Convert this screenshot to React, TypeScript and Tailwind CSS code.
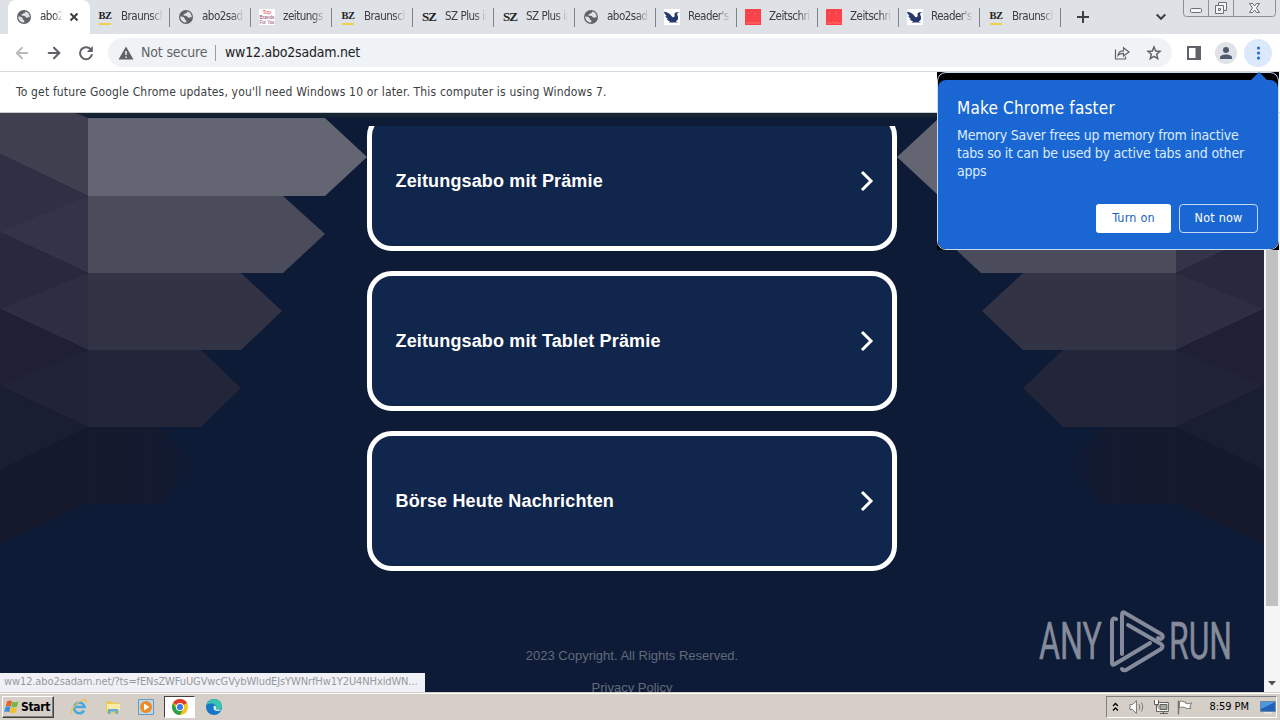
import { ReactNode } from 'react';
import { ArrowLeft, ArrowRight } from 'lucide-react';

type Icon = 'globe' | 'bz' | 'brands' | 'sz' | 'bird' | 'red';

const TABS: { icon: Icon; title: string }[] = [
  { icon: 'globe', title: 'abo2' },
  { icon: 'bz', title: 'Braunsch' },
  { icon: 'globe', title: 'abo2sad' },
  { icon: 'brands', title: 'zeitungs' },
  { icon: 'bz', title: 'Braunsch' },
  { icon: 'sz', title: 'SZ Plus in' },
  { icon: 'sz', title: 'SZ Plus in' },
  { icon: 'globe', title: 'abo2sad' },
  { icon: 'bird', title: "Reader's" },
  { icon: 'red', title: 'Zeitschri' },
  { icon: 'red', title: 'Zeitschri' },
  { icon: 'bird', title: "Reader's" },
  { icon: 'bz', title: 'Braunsch' },
];

const LINKS = ['Zeitungsabo mit Prämie', 'Zeitungsabo mit Tablet Prämie', 'Börse Heute Nachrichten'];

function Favicon({ icon }: { icon: Icon }) {
  if (icon === 'globe') {
    return (
      <svg className="shrink-0" width="16" height="16" viewBox="0 0 16 16">
        <circle cx="8" cy="8" r="7" fill="#5f6368" />
        <path d="M2.2 7.6c1.6 0 3 .2 4 1.200.9.900.2 1.900 1.400 2.200 1 .3.900 1.400.5 2.600C4.700 13.700 2.300 11.200 2.200 7.600ZM9.300 2.400c-.2 1.300-.6 1.700-1.700 1.800-1 .1-.9 1-1.800 1.200-.7.2-.3 1.300.7 1.300 1.600 0 2.700.2 3.100 1.300.4.900 1.400.7 2.200.4.700-.3 1.400-.3 1.900.1.300-3-1.700-5.600-4.400-6.100Z" fill="#dee1e6" />
      </svg>
    );
  }
  if (icon === 'bz') {
    return (
      <span className="flex h-4 w-4 shrink-0 flex-col items-center font-['Liberation_Serif'] text-[10.5px] leading-[14px] font-bold tracking-[-0.6px] text-[#222]">
        BZ
        <span className="h-[2px] w-3 bg-[#f0cf4a]" />
      </span>
    );
  }
  if (icon === 'sz') {
    return <span className="flex h-4 w-4 shrink-0 items-center justify-center font-['Liberation_Serif'] text-[13px] font-bold tracking-[-1px] text-[#222]">SZ</span>;
  }
  if (icon === 'brands') {
    return (
      <svg className="shrink-0" width="16" height="16" viewBox="0 0 16 16">
        <path d="M0 0h16v16H0z" fill="#fff" />
        <g fontFamily="Liberation Sans, sans-serif" fontSize="5.500" fill="#8f3b68" textAnchor="middle">
          <text x="8" y="4.800" fill="#e8383c">Top</text>
          <text x="8" y="10" textLength="15" lengthAdjust="spacingAndGlyphs">Brands</text>
          <text x="8" y="15.300" textLength="15" lengthAdjust="spacingAndGlyphs">For You</text>
        </g>
      </svg>
    );
  }
  if (icon === 'bird') {
    return (
      <svg className="shrink-0" width="16" height="16" viewBox="0 0 16 16">
        <path d="M0 0h16v16H0z" fill="#fff" />
        <path d="M0 2.800c2 .2 5.500 1 7.500 4.200.8 1.300 2 1.600 2.800.8.900-1-.3-2.300.4-3.500.9-1.500 3-1.400 5-.6-1.400.2-2.600.5-2.700 1.400 0 1 1.300 2.100 1.100 4.100-.2 1.700-1.200 2.700-2.600 3.200l2.800 1.200H4.500l1.800-1.300C4.500 12 3.300 11.200 2.800 10l1.500.1C2.700 9.300 1.700 8.200 1.400 6.900l1.500.4C1.300 6 .4 4.600 0 2.800Z" fill="#27386f" />
      </svg>
    );
  }
  return (
    <svg className="shrink-0" width="16" height="16" viewBox="0 0 16 16">
      <path d="M0 0h16v16H0z" fill="#fb4248" />
      <path d="M1 14.500l2-1 2 1 2-1.500 2 1.500 2-1 2 1 2-1M3 4l2 1M9 5l2-1" stroke="#ff7476" fill="none" />
    </svg>
  );
}

function TabStrip() {
  return (
    <div className="flex h-[34px] bg-[#dee1e6] pl-2">
      {TABS.map((t, i) => (
        <div
          key={i}
          className={
            i === 0
              ? '-mr-px flex h-[34px] w-[82px] items-center rounded-t-lg bg-white pl-2'
              : 'relative flex h-[34px] w-[81px] items-center pl-2'
          }
        >
          <Favicon icon={t.icon} />
          <span
            className={
              i === 0
                ? 'ml-2 w-[23px] text-[11.5px] tracking-[-0.5px] whitespace-nowrap text-[#3c4043] [mask-image:linear-gradient(to_right,black_60%,transparent)]'
                : 'ml-2 w-[42px] text-[11.5px] tracking-[-0.5px] whitespace-nowrap text-[#3c4043] [mask-image:linear-gradient(to_right,black_70%,transparent)]'
            }
          >
            {t.title}
          </span>
          {i === 0 ? (
            <svg className="ml-[6px]" width="10" height="10" viewBox="0 0 10 10">
              <path d="M1.500 1.500l7 7M8.500 1.500l-7 7" stroke="#3c4043" strokeWidth="2" />
            </svg>
          ) : (
            <span className="absolute top-2 right-0 h-[19px] w-px bg-[#808387]" />
          )}
        </div>
      ))}
      <svg className="mt-[10px] ml-[15px]" width="14" height="14" viewBox="0 0 14 14">
        <path d="M7 1v12M1 7h12" stroke="#3c4043" strokeWidth="2" />
      </svg>
      <svg className="mt-[13px] ml-[66px]" width="10" height="8" viewBox="0 0 10 8">
        <path d="M.7 1.500L5 5.800 9.300 1.500" stroke="#3c4043" strokeWidth="2" fill="none" />
      </svg>
      <svg className="ml-[17px]" width="94" height="18" viewBox="0 0 94 18" fill="none" stroke="#8d9095">
        <path d="M.5 0v13.500a3 3 0 0 0 3 3h86a3 3 0 0 0 3-3V0M25.500 0v16.500M50.500 0v16.500" />
        <rect x="7.500" y="8.500" width="11" height="4" rx="1" stroke="#6b6e73" fill="#f4f5f7" />
        <path d="M35.500 2.500h8v8h-3v3h-8v-8h3zM35.500 5.500h5v5" stroke="#6b6e73" fill="#f4f5f7" />
        <path d="M35.500 8.500h2v2h-2z" stroke="#6b6e73" />
        <path d="M66.500 3.500h3l2 2.500 2-2.500h3L73.500 8l3 4.500h-3l-2-2.500-2 2.500h-3L69.500 8z" stroke="#6b6e73" fill="#f4f5f7" />
      </svg>
    </div>
  );
}

function Toolbar() {
  return (
    <div className="flex h-[38px] items-center border-b border-[#d7d9dc] bg-white text-[#5f6368]">
      <ArrowLeft className="ml-[13px] text-[#b8babd]" size={18} strokeWidth={2.4} />
      <ArrowRight className="ml-[14px]" size={18} strokeWidth={2.8} />
      <svg className="ml-[15px]" width="16" height="16" viewBox="0 0 16 16">
        <path d="M13.300 5.200A6 6 0 1 0 14 9.200" stroke="#5f6368" strokeWidth="2" fill="none" />
        <path d="M14.800 1v6h-6z" fill="#5f6368" />
      </svg>
      <div className="ml-[14px] flex h-[29px] w-[1064px] items-center rounded-full bg-[#f0f3f5] pl-[10px]">
        <svg width="16" height="14" viewBox="0 0 16 14">
          <path d="M8 .5L15.500 13.500H.5z" fill="#5f6368" />
          <path d="M8 5v4M8 10.500v1.500" stroke="#f0f3f5" strokeWidth="1.500" />
        </svg>
        <span className="ml-[7px] w-[67px] text-[14px] tracking-[-0.15px] whitespace-nowrap">Not secure</span>
        <span className="ml-[7px] h-4 w-px bg-[#9a9da1]" />
        <span className="ml-[9px] grow text-[14px] tracking-[-0.22px] text-[#202124]">ww12.abo2sadam.net</span>
        <svg width="16" height="16" viewBox="0 0 16 16" fill="none" stroke="#5f6368" strokeWidth="1.200">
          <path d="M1.500 4.500v9.500h10v-2.500" />
          <path d="M4 10.500c.3-3 2.200-4.700 5.500-4.700V2.800L15 7l-5.500 4V8.400C7 8.400 5.200 9 4 10.500Z" />
        </svg>
        <svg className="mr-[10px] ml-4" width="16" height="16" viewBox="0 0 16 16">
          <path d="M8 2l1.700 4 4.300.4-3.300 2.900 1 4.300L8 11.300l-3.700 2.300 1-4.300L2 6.400 6.300 6z" fill="none" stroke="#5f6368" strokeWidth="1.500" />
        </svg>
      </div>
      <svg className="ml-[15px]" width="14" height="14" viewBox="0 0 14 14">
        <path d="M1 1h12v12H1z" fill="none" stroke="#5f6368" strokeWidth="2" />
        <path d="M8.500 0H14v14H8.500z" fill="#5f6368" />
      </svg>
      <svg className="ml-[14px]" width="22" height="22" viewBox="0 0 22 22">
        <circle cx="11" cy="11" r="11" fill="#dfe2e6" />
        <circle cx="11" cy="8" r="3" fill="#4e5a70" />
        <path d="M5 17v-1.500c0-4 12-4 12 0V17z" fill="#4e5a70" />
      </svg>
      <svg className="ml-[7px]" width="28" height="28" viewBox="0 0 28 28">
        <circle cx="14" cy="14" r="14" fill="#dce8fb" />
        <g fill="#1a66d2">
          <circle cx="14.500" cy="9" r="1.500" />
          <circle cx="14.500" cy="14" r="1.500" />
          <circle cx="14.500" cy="19" r="1.500" />
        </g>
      </svg>
    </div>
  );
}

// One side of the backdrop; the other side is the same group mirrored
function Facets() {
  return (
    <g>
      <path d="M0 0H75L88 5V83L0 41Z" fill="#403f50" />
      <path d="M0 41L88 83 0 124Z" fill="#302f43" />
      <path d="M88 83V160L0 119Z" fill="#343448" />
      <path d="M0 119L88 160 0 200Z" fill="#29293d" />
      <path d="M88 160V237L0 196Z" fill="#2e2e42" />
      <path d="M0 196L88 237 0 278Z" fill="#1f2035" />
      <path d="M88 237V314L0 273Z" fill="#212337" />
      <path d="M0 273L88 314 0 357Z" fill="#191e33" />
      <path d="M88 314V391L0 432V357Z" fill="#14192e" />
      <path d="M88 5H325L367 44 325 83H88Z" fill="#646573" />
      <path d="M88 83H283L325 121 283 160H88Z" fill="#4b4c5b" />
      <path d="M88 160H241L282 198 241 237H88Z" fill="#323345" />
      <path d="M88 237H201L241 275 201 314H88Z" fill="#222638" />
      <path d="M88 314H160L200 352 160 391H88Z" fill="url(#fade)" />
    </g>
  );
}

function LinkCard({ children }: { children: ReactNode }) {
  return (
    <div className="flex h-[140px] w-[530px] shrink-0 items-center justify-between rounded-[25px] border-[5px] border-white bg-[#10264d] pr-[18px] pl-[23.5px]">
      <span className="font-['Liberation_Sans'] text-[18px] font-bold tracking-[0.15px] text-white">{children}</span>
      <svg width="14" height="22" viewBox="0 0 14 22">
        <path d="M2 2l9 9-9 9" stroke="#fff" strokeWidth="3" fill="none" />
      </svg>
    </div>
  );
}

function Page() {
  return (
    <div className="relative flex h-[579px] bg-[#0e1b36]">
      <svg className="absolute top-0 left-0" width="1264" height="579" viewBox="0 0 1264 579">
        <defs>
          <linearGradient id="fade" x1="0" x2="1">
            <stop offset="0" stopColor="#151a2e" />
            <stop offset=".6" stopColor="#141a2f" />
            <stop offset="1" stopColor="#0e1b36" />
          </linearGradient>
        </defs>
        <path d="M0 0H1264V4H0z" fill="#152430" />
        <Facets />
        <g transform="translate(1264 0) scale(-1 1)">
          <Facets />
        </g>
      </svg>
      <div className="relative flex w-[1264px] flex-col items-center overflow-hidden pt-[13px]">
        <div className="flex shrink-0 flex-col gap-5 overflow-hidden">
          <div className="-mt-[15px]">
            <LinkCard>{LINKS[0]}</LinkCard>
          </div>
          <LinkCard>{LINKS[1]}</LinkCard>
          <LinkCard>{LINKS[2]}</LinkCard>
        </div>
        <div className="mt-[77px] flex shrink-0 flex-col items-center gap-4 font-['Liberation_Sans'] text-[13px] leading-4 text-[#626a7c]">
          <span>2023 Copyright. All Rights Reserved.</span>
          <span>Privacy Policy</span>
        </div>
      </div>
      <div className="flex w-4 flex-col items-center justify-between bg-[#f5f5f5]">
        <div className="h-[493px] w-3 bg-[#c1c1c1]" />
        <svg className="mb-[6px]" width="8" height="5" viewBox="0 0 8 5">
          <path d="M0 0h8L4 4.500z" fill="#505050" />
        </svg>
      </div>
      <Watermark />
      <div className="absolute bottom-0 left-0 flex h-[19px] w-[425px] items-center bg-[#eff1f6] pl-1 text-[11px] tracking-[-0.11px] whitespace-nowrap text-[#96999d]">
        ww12.abo2sadam.net/?ts=fENsZWFuUGVwcGVybWludEJsYWNrfHw1Y2U4NHxidWN...
      </div>
    </div>
  );
}

function Watermark() {
  return (
    <svg className="absolute top-[492px] left-[1034px]" width="200" height="72" viewBox="0 0 200 72">
      <g fill="#858b9a" stroke="#858b9a" strokeWidth=".5" fontFamily="Roboto, sans-serif" fontSize="52">
        <text x="5" y="54" textLength="63" lengthAdjust="spacingAndGlyphs">ANY</text>
        <text x="135" y="54" textLength="63" lengthAdjust="spacingAndGlyphs">RUN</text>
      </g>
      <g fill="none" stroke="#858b9a" strokeWidth="4" strokeLinejoin="round" strokeLinecap="round">
        <path d="M82 14q-4-2-4 3V58q0 3 3 1L116 38" />
        <path d="M88 49V10q0-4 3-2L127 29q3 2 1 4-1 2-4 0" />
        <path d="M94 20L127 39q3 3 0 5L92 65q-3 1-4-1" />
      </g>
    </svg>
  );
}

function MemorySaverPopup() {
  return (
    <div className="absolute top-[72px] left-[937px] h-[178px] w-[342px] bg-black">
      <div className="h-full rounded-[9px] border border-[#c9d9ee] pt-[7px]">
        <div className="relative flex h-full flex-col rounded-lg bg-[#1a67d4] pt-[17px] pr-5 pl-[19px] text-white">
          <svg className="absolute -top-2 right-[11px]" width="16" height="8" viewBox="0 0 16 8">
            <path d="M0 8L8 0l8 8z" fill="#1a67d4" />
          </svg>
          <h2 className="text-[17px] leading-[22px] tracking-[0.2px] whitespace-nowrap">Make Chrome faster</h2>
          <p className="mt-[7px] text-[14px] leading-[18px] tracking-[-0.21px] whitespace-nowrap text-[#dcebff]">
            Memory Saver frees up memory from inactive
            <br />
            tabs so it can be used by active tabs and other
            <br />
            apps
          </p>
          <div className="mt-6 flex justify-end gap-2 text-[12.5px] tracking-[0.2px]">
            <button className="h-[29px] w-[75px] rounded-[3px] bg-white text-[#1a5fc4]">Turn on</button>
            <button className="h-[29px] w-[79px] rounded-[4px] border border-[#c3dafa]">Not now</button>
          </div>
        </div>
      </div>
    </div>
  );
}

function Taskbar() {
  return (
    <div className="flex h-7 items-center border-t border-[#d5cfc8] bg-[#d5cfc8] shadow-[inset_0_1px_0_#fff]">
      <div className="mt-px ml-[2px] flex h-[22px] w-[52px] items-center border border-t-white border-r-[#404040] border-b-[#404040] border-l-white pl-px text-[12px] font-bold tracking-[-0.3px] text-black shadow-[inset_-1px_-1px_0_#808080]">
        <svg className="mr-px shrink-0" width="16" height="16" viewBox="0 0 16 16">
          <path d="M3 2.500c2-1.500 3.500-1.200 5-.3L6.700 7.500C5.200 6.500 3.500 6.400 1.800 7.300z" fill="#e8602c" />
          <path d="M8.500 2.500c2 1 3.600.8 6-.2l-1.300 5.300C11.300 8.500 9.500 8.600 7.200 7.700z" fill="#72b943" />
          <path d="M1.500 8c2-1 3.500-.8 5 .1l-1.300 5.200C3.600 12.400 2 12.300.2 13.200z" fill="#3b8ed8" />
          <path d="M7 8.400c1.800 1 3.600.8 6-.2l-1.300 5.300c-1.900 1-3.700 1-6 0z" fill="#f7bd2d" />
        </svg>
        Start
      </div>
      <svg className="ml-[16px]" width="18" height="18" viewBox="0 0 18 18" fill="none">
        <path d="M14 12.500a5.300 5.300 0 1 1 .6-3.500H5" stroke="#4aa7e0" strokeWidth="2.600" />
        <path d="M2 16C-1 14 6 4 13 2c4-1 4 1 3 3" stroke="#edc34a" strokeWidth="1.300" />
      </svg>
      <svg className="ml-[16px]" width="18" height="18" viewBox="0 0 18 18">
        <path d="M2 3h5l1 1.500h7V15H2z" fill="#e8c95c" />
        <path d="M3 6h13v6H3z" fill="#f8e9a7" />
        <path d="M4 16v-5h10v5h-2.500v-2.500h-5V16z" fill="#65aed3" />
      </svg>
      <svg className="ml-[16px]" width="16" height="16" viewBox="0 0 16 16">
        <path d="M.5.5h15v15H.5z" fill="#b8d8ec" stroke="#669bbc" />
        <circle cx="8" cy="8" r="6" fill="#f08a24" />
        <path d="M6 4.500L11.500 8 6 11.500z" fill="#fff" />
      </svg>
      <div className="ml-[10px] flex h-[22px] w-[31px] items-center justify-center border border-t-[#404040] border-r-white border-b-white border-l-[#404040] bg-white">
        <svg width="16" height="16" viewBox="0 0 16 16">
          <circle cx="8" cy="8" r="8" fill="#fbc116" />
          <path d="M8 8L1.070 4A8 8 0 0 1 14.930 4z" fill="#e33b2e" />
          <path d="M1.070 4A8 8 0 0 0 8 16l3.400-6L8 8 4.600 10z" fill="#2da24c" />
          <circle cx="8" cy="8" r="4" fill="#fff" />
          <circle cx="8" cy="8" r="3.100" fill="#3b7ce8" />
        </svg>
      </div>
      <svg className="ml-[11px]" width="16" height="16" viewBox="0 0 16 16">
        <circle cx="8" cy="8" r="8" fill="#1577c6" />
        <path d="M.5 6C2 1 6 0 8 0c5 0 8 3.500 8 7 0 2.500-2 4-4 4-1.500 0-2.500-.5-2-1.500C11 7 8.500 4.500 5.500 4.500 3 4.500 1.500 5 .5 6z" fill="#3ac2b2" />
        <path d="M8.500 6.500C6.500 8 7.500 12 11 12c2 0 3.500-.5 4.500-1.500-.8-.3-6 1.500-5.500-1.500.3-1 0-2-1.500-2.500z" fill="#d5e8f3" />
      </svg>
      <div className="mt-px mr-[3px] ml-auto flex h-[22px] w-[171px] items-center border border-t-[#808080] border-r-white border-b-white border-l-[#808080]">
        <svg className="ml-[5px]" width="7" height="10" viewBox="0 0 7 10" fill="none" stroke="#000" strokeWidth="1.300">
          <path d="M1 4l2.500-2.500L6 4M1 8.500L3.500 6 6 8.500" />
        </svg>
        <svg className="ml-[10px]" width="17" height="16" viewBox="0 0 17 16" fill="none" stroke="#77756f">
          <path d="M1 5.500h2.500l4-4v13l-4-4H1z" fill="#fff" />
          <path d="M10 5c1 2 1 4 0 6M12.500 3.500c1.700 3 1.700 6 0 9" />
        </svg>
        <svg className="ml-[7px]" width="17" height="16" viewBox="0 0 17 16" fill="none" stroke="#5e5c58">
          <path d="M5 3.500h10.500v9H5z" fill="#fff" />
          <path d="M7 5.500h7v5H7z" fill="#aaa8a2" />
          <path d="M7 14.500h8M10.500 12.500v2" />
          <path d="M1.500 1v4.500h4V1M3.500 5.500v7h3" fill="#fff" />
        </svg>
        <svg className="ml-[7px]" width="17" height="16" viewBox="0 0 17 16" stroke="#77756f">
          <path d="M1.500 1.500v14" strokeWidth="1.500" />
          <path d="M2.500 2.500c3-1.500 4 1 6.500.5v1.500c2 .5 4-.5 6-.5l-2 3 1 2.500c-3 0-5 .5-6-1-2-.5-4-.5-5.500.500z" fill="#fff" />
        </svg>
        <span className="ml-[16px] w-10 text-[11px] tracking-[-0.05px] whitespace-nowrap text-black">8:59 PM</span>
        <svg className="ml-[11px]" width="16" height="14" viewBox="0 0 16 14">
          <path d="M.5 1.500h15v10H.5z" fill="#2162b8" stroke="#6788a9" />
          <path d="M1 2h14L1 9z" fill="#4f98df" />
          <path d="M4 13h8" stroke="#f5f5f5" />
        </svg>
      </div>
    </div>
  );
}

export default function App() {
  return (
    <div className="relative flex h-[720px] w-[1280px] flex-col overflow-hidden bg-white font-['DejaVu_Sans_Condensed','DejaVu_Sans',sans-serif]">
      <TabStrip />
      <Toolbar />
      <div className="flex h-[41px] items-center border-b border-[#c9ccd0] bg-white pl-4 text-[12px] tracking-[0.165px] text-[#3c4043]">
        To get future Google Chrome updates, you'll need Windows 10 or later. This computer is using Windows 7.
      </div>
      <Page />
      <Taskbar />
      <MemorySaverPopup />
    </div>
  );
}
